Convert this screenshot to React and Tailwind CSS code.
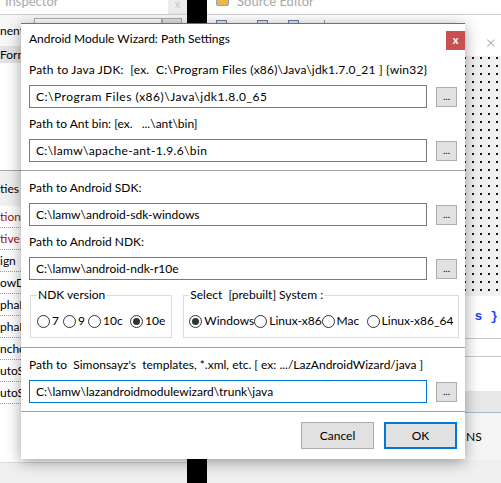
import React from "react";

const Radio = ({ checked, label, w }) => (
  <div className={`flex items-center gap-[2px] shrink-0 whitespace-nowrap ${w}`}>
    <span className="w-[13px] h-[13px] rounded-full border border-[#333] bg-white flex items-center justify-center shrink-0">
      {checked && <span className="w-[7px] h-[7px] rounded-full bg-[#333]" />}
    </span>
    <span>{label}</span>
  </div>
);

const PathRow = ({ value, focused, className = "" }) => (
  <div className="flex items-center gap-[9px]">
    <div
      className={`h-[23px] w-[398px] border bg-white pl-[6px] flex items-center ${
        focused ? "border-[#0078d7]" : "border-[#7a7a7a]"
      } ${className}`}
    >
      {value}
    </div>
    <button className="w-[21px] h-[20px] bg-[#e1e1e1] border border-[#adadad] text-[10px] leading-none flex items-end justify-center pb-[5px]">
      ...
    </button>
  </div>
);

const Label = ({ children, className = "" }) => (
  <div className={`h-[16px] leading-[16px] whitespace-pre ${className}`}>{children}</div>
);

const propRows = [
  { t: "tion", red: true },
  { t: "tive", red: true },
  { t: "ign" },
  { t: "owD" },
  { t: "phaB" },
  { t: "phaB" },
  { t: "ncho" },
  { t: "utoS" },
  { t: "utoSi" },
];

export default function App() {
  return (
    <div className="relative w-[501px] h-[483px] overflow-hidden flex bg-[#f0f0f0] text-[12px] text-black font-['Lato',sans-serif]">
      {/* Object Inspector behind */}
      <div className="w-[187px] flex flex-col shrink-0">
        <div className="h-[14px] bg-white flex justify-between overflow-hidden">
          <span className="-mt-[7px] pl-[5px] text-[13px] leading-[16px] text-[#a8a8a8]">Inspector</span>
          <span className="w-[19px] h-[14px] bg-[#ececec] text-[#c8c8c8] text-center text-[11px] leading-[8px]">x</span>
        </div>
        <div className="h-px bg-[#cfcfcf]" />
        <div className="h-[31px] flex items-center bg-[#f7f7f7]">
          <span className="w-[34px]">nent</span>
          <div className="w-[128px] h-[26px] self-start mt-[3px] border border-[#adadad] bg-white" />
          <div className="w-[20px] h-[22px] self-start mt-[3px] bg-[#e1e1e1] border border-[#adadad]" />
        </div>
        <div className="h-[17px] bg-[#e3e3e3] flex items-center">Form</div>
        <div className="h-[107px] bg-white" />
        <div className="h-px bg-[#a8a8a8]" />
        <div className="h-[35px] bg-[#f0f0f0] flex items-center">ties</div>
        <div className="bg-white">
          {propRows.map((r, i) => (
            <div
              key={i}
              className={`h-[22px] flex items-center border-b border-dotted border-[#9a9a9a] ${
                r.red ? "text-[#a01010]" : "text-black"
              }`}
            >
              {r.t}
            </div>
          ))}
        </div>
        <div className="h-[58px] bg-white" />
        <div className="h-px bg-[#dadada]" />
        <div className="flex-1 bg-[#f0f0f0]" />
      </div>

      {/* desktop gap */}
      <div className="w-[20px] bg-black shrink-0" />

      {/* Source Editor behind */}
      <div className="flex-1 flex flex-col bg-white">
        <div className="h-[14px] flex items-start overflow-hidden">
          <span className="ml-[9px] -mt-[3px] w-[13px] h-[9px] rounded-[2px] bg-[#e9b949] border border-[#8aa4c8]" />
          <span className="-mt-[7px] ml-[8px] text-[13px] leading-[16px] text-[#a8a8a8]">Source Editor</span>
        </div>
        <div className="h-px bg-[#cfcfcf]" />
        <div className="h-[13px] flex items-start gap-[20px] pl-[9px] pt-[5px]">
          <span className="w-[11px] h-[8px] border border-[#6c7fa0] bg-[#dfe7f3]" />
          <span className="w-[11px] h-[8px] border border-[#6c7fa0] bg-[#dfe7f3] ml-[10px]" />
          <span className="w-[11px] h-[8px] border border-[#6c7fa0] bg-[#dfe7f3]" />
          <span className="w-px h-[8px] bg-[#9a9a9a] ml-[5px]" />
        </div>
        <div className="h-[28px] flex justify-end items-center pr-[5px] text-[#9a9a9a] text-[18px] font-light">×</div>
        <div className="h-[240px] bg-[#f0f0f0] bg-[radial-gradient(circle,#111_0.7px,transparent_0.9px)] bg-[size:8px_8px] bg-[position:-2px_-2px]" />
        <div className="h-[42px] flex items-center justify-end pr-[3px] font-['Liberation_Mono',monospace] font-bold text-[13px] text-[#1a3cff] whitespace-pre">
          {"s }"}
        </div>
        <div className="h-px bg-[#c8c8c8]" />
        <div className="h-[17px]" />
        <div className="h-px bg-[#c8c8c8]" />
        <div className="h-[34px]" />
        <div className="h-[21px] bg-[#e8e8e8]" />
        <div className="h-px bg-[#a8b8cc]" />
        <div className="h-[47px] bg-[#f5f5f5] flex items-center pl-[259px]">NS</div>
        <div className="flex-1 bg-[#f0f0f0]" />
      </div>

      {/* Dialog */}
      <div className="absolute left-[21px] top-[23px] w-[444px] bg-white border-t border-[#2b7fd4] shadow-[0_3px_14px_rgba(0,0,0,0.38)] flex flex-col">
        <div className="h-[30px] flex justify-between items-start">
          <span className="pl-[8px] leading-[30px]">Android Module Wizard: Path Settings</span>
          <span className="mt-[7px] w-[19px] h-[19px] bg-[#c75050] text-white text-[11px] font-bold leading-[17px] text-center">
            x
          </span>
        </div>

        <div className="px-[8px] pt-[8px] pb-[8px]">
          <Label className="tracking-[0.2px]">
            {"Path to Java JDK:  [ex.  C:\\Program Files (x86)\\Java\\jdk1.7.0_21 ] {win32}"}
          </Label>
          <div className="mt-[7px]">
            <PathRow value={"C:\\Program Files (x86)\\Java\\jdk1.8.0_65"} className="tracking-[0.5px]" />
          </div>
          <Label className="mt-[8px]">{"Path to Ant bin: [ex.   ...\\ant\\bin]"}</Label>
          <div className="mt-[7px]">
            <PathRow value={"C:\\lamw\\apache-ant-1.9.6\\bin"} className="tracking-[0.35px]" />
          </div>
        </div>
        <div className="h-px bg-[#a0a0a0]" />

        <div className="px-[8px] pt-[9px] pb-[9px]">
          <Label>Path to Android SDK:</Label>
          <div className="mt-[7px]">
            <PathRow value={"C:\\lamw\\android-sdk-windows"} />
          </div>
          <Label className="mt-[8px]">Path to Android NDK:</Label>
          <div className="mt-[7px]">
            <PathRow value={"C:\\lamw\\android-ndk-r10e"} />
          </div>
          <div className="mt-[7px] flex gap-[11px] pl-[1px]">
            <fieldset className="w-[143px] h-[51px] border border-[#dcdcdc] px-[6px]">
              <legend className="px-[1px] leading-[16px]">NDK version</legend>
              <div className="mt-[10px] h-[16px] flex items-center">
                <Radio w="min-w-[26px]" label="7" />
                <Radio w="min-w-[25px]" label="9" />
                <Radio w="min-w-[42px]" label="10c" />
                <Radio w="" label="10e" checked />
              </div>
            </fieldset>
            <fieldset className="flex-1 h-[51px] border border-[#dcdcdc] px-[5px]">
              <legend className="px-[1px] leading-[16px] whitespace-pre">{"Select  [prebuilt] System :"}</legend>
              <div className="mt-[10px] h-[16px] flex items-center">
                <Radio w="min-w-[64px]" label="Windows" checked />
                <Radio w="min-w-[65px]" label="Linux-x86" />
                <Radio w="min-w-[45px]" label="Mac" />
                <Radio w="" label="Linux-x86_64" />
              </div>
            </fieldset>
          </div>
        </div>
        <div className="h-px bg-[#a0a0a0]" />

        <div className="px-[8px] pt-[9px] pb-[8px]">
          <Label>{"Path to  Simonsayz's  templates, *.xml, etc. [ ex: .../LazAndroidWizard/java ]"}</Label>
          <div className="mt-[7px]">
            <PathRow value={"C:\\lamw\\lazandroidmodulewizard\\trunk\\java"} focused />
          </div>
        </div>
        <div className="h-px bg-[#a0a0a0]" />

        <div className="flex justify-end gap-[10px] pr-[8px] pt-[10px] pb-[10px]">
          <button className="w-[73px] h-[27px] bg-[#e1e1e1] border border-[#adadad]">Cancel</button>
          <button className="w-[73px] h-[27px] bg-[#e1e1e1] border-2 border-[#0078d7]">OK</button>
        </div>
      </div>
    </div>
  );
}
